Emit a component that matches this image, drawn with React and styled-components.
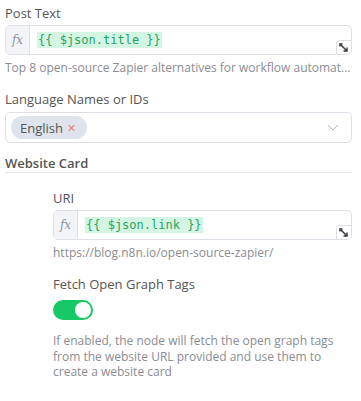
import React from 'react';
import styled, { createGlobalStyle } from 'styled-components';

const GlobalStyle = createGlobalStyle`
  body {
    margin: 0;
    background: #ffffff;
    font-family: "Open Sans", "Liberation Sans", sans-serif;
  }
`;

const Panel = styled.div`
  width: 361px;
  box-sizing: border-box;
  padding: 4px 9px 0 5px;
`;

const Field = styled.div`
  display: flex;
  flex-direction: column;
  margin-bottom: ${(p) => p.gap || 0}px;
`;

const Label = styled.div`
  font-size: 13px;
  line-height: 18px;
  color: #555;
  margin-bottom: 3px;
`;

const ExprBox = styled.div`
  position: relative;
  display: flex;
  height: 30px;
  box-sizing: border-box;
  border: 1px solid #dcdfe6;
  border-radius: 5px;
  background: #fff;
  overflow: hidden;
`;

const FxTag = styled.div`
  width: 23px;
  flex: none;
  display: flex;
  align-items: center;
  justify-content: center;
  background: #f2f4f8;
  border-right: 1px solid #dcdfe6;
  color: #909399;
  font-family: "DejaVu Serif", "Liberation Serif", serif;
  font-style: italic;
  font-size: 12px;
`;

const ExprText = styled.div`
  display: flex;
  align-items: center;
  padding-left: 7px;
`;

const Resolved = styled.span`
  background: #d5f5e3;
  color: #27a464;
  font-family: "DejaVu Sans Mono", "Liberation Mono", monospace;
  font-size: 12px;
  line-height: 16px;
  padding: 0 1px;
`;

const ResizeHandle = styled.div`
  position: absolute;
  right: 0;
  bottom: 0;
  width: 15px;
  height: 14px;
  box-sizing: border-box;
  border-left: 1px solid #dcdfe6;
  border-top: 1px solid #dcdfe6;
  border-top-left-radius: 4px;
  background: #fff;
  display: flex;
  align-items: center;
  justify-content: center;
`;

const Hint = styled.div`
  font-size: 12px;
  line-height: ${(p) => (p.wrap ? '15.5px' : '16px')};
  color: #8a8c92;
  margin-top: ${(p) => (p.wrap ? 13 : 5)}px;
  white-space: ${(p) => (p.wrap ? 'normal' : 'nowrap')};
`;

const SelectBox = styled.div`
  display: flex;
  align-items: center;
  justify-content: space-between;
  height: 31px;
  box-sizing: border-box;
  border: 1px solid #dcdfe6;
  border-radius: 5px;
  padding: 0 12px 0 5px;
  margin-top: 1px;
`;

const Chip = styled.span`
  display: inline-flex;
  align-items: center;
  gap: 4px;
  height: 23px;
  padding: 0 11px 0 9px;
  border-radius: 12px;
  background: #dfe3ec;
  color: #555;
  font-size: 13px;
`;

const ChipClose = styled.span`
  color: #f0807a;
  font-size: 11px;
  line-height: 1;
`;

const SectionTitle = styled.div`
  font-size: 13px;
  font-weight: 600;
  line-height: 17px;
  color: #555;
  border-bottom: 1px solid #e4e7ed;
  margin: 12px 0 16px;
`;

const Nested = styled.div`
  padding-left: 48px;
`;

const Toggle = styled.div`
  width: 40px;
  height: 20px;
  border-radius: 10px;
  background: #17c866;
  display: flex;
  align-items: center;
  justify-content: flex-end;
  padding: 0 2px;
  box-sizing: border-box;
  margin-top: 4px;
`;

const Knob = styled.div`
  width: 16px;
  height: 16px;
  border-radius: 50%;
  background: #fff;
`;

const ResizeIcon = () => (
  <svg width="10" height="10" viewBox="0 0 10 10" fill="none" stroke="#333" strokeWidth="1.4">
    <path d="M1 3.5V1h2.5" />
    <path d="M1.5 1.5l6 6" />
    <path d="M4.5 8h3.5V4.5" />
  </svg>
);

const Chevron = () => (
  <svg width="12" height="7" viewBox="0 0 12 7" fill="none" stroke="#b4b7bd" strokeWidth="1">
    <path d="M1 1l5 5 5-5" />
  </svg>
);

const Expression = ({ value }) => (
  <ExprBox>
    <FxTag>fx</FxTag>
    <ExprText>
      <Resolved>{value}</Resolved>
    </ExprText>
    <ResizeHandle>
      <ResizeIcon />
    </ResizeHandle>
  </ExprBox>
);

export default function App() {
  return (
    <>
      <GlobalStyle />
      <Panel>
        <Field gap={14}>
          <Label>Post Text</Label>
          <Expression value="{{ $json.title }}" />
          <Hint>Top 8 open-source Zapier alternatives for workflow automat...</Hint>
        </Field>
        <Field>
          <Label>Language Names or IDs</Label>
          <SelectBox>
            <Chip>
              English <ChipClose>✕</ChipClose>
            </Chip>
            <Chevron />
          </SelectBox>
        </Field>
        <SectionTitle>Website Card</SectionTitle>
        <Nested>
          <Field gap={14}>
            <Label>URI</Label>
            <Expression value="{{ $json.link }}" />
            <Hint>https://blog.n8n.io/open-source-zapier/</Hint>
          </Field>
          <Field>
            <Label>Fetch Open Graph Tags</Label>
            <Toggle>
              <Knob />
            </Toggle>
            <Hint wrap>
              If enabled, the node will fetch the open graph tags from the website URL provided and use them to create a website card
            </Hint>
          </Field>
        </Nested>
      </Panel>
    </>
  );
}
